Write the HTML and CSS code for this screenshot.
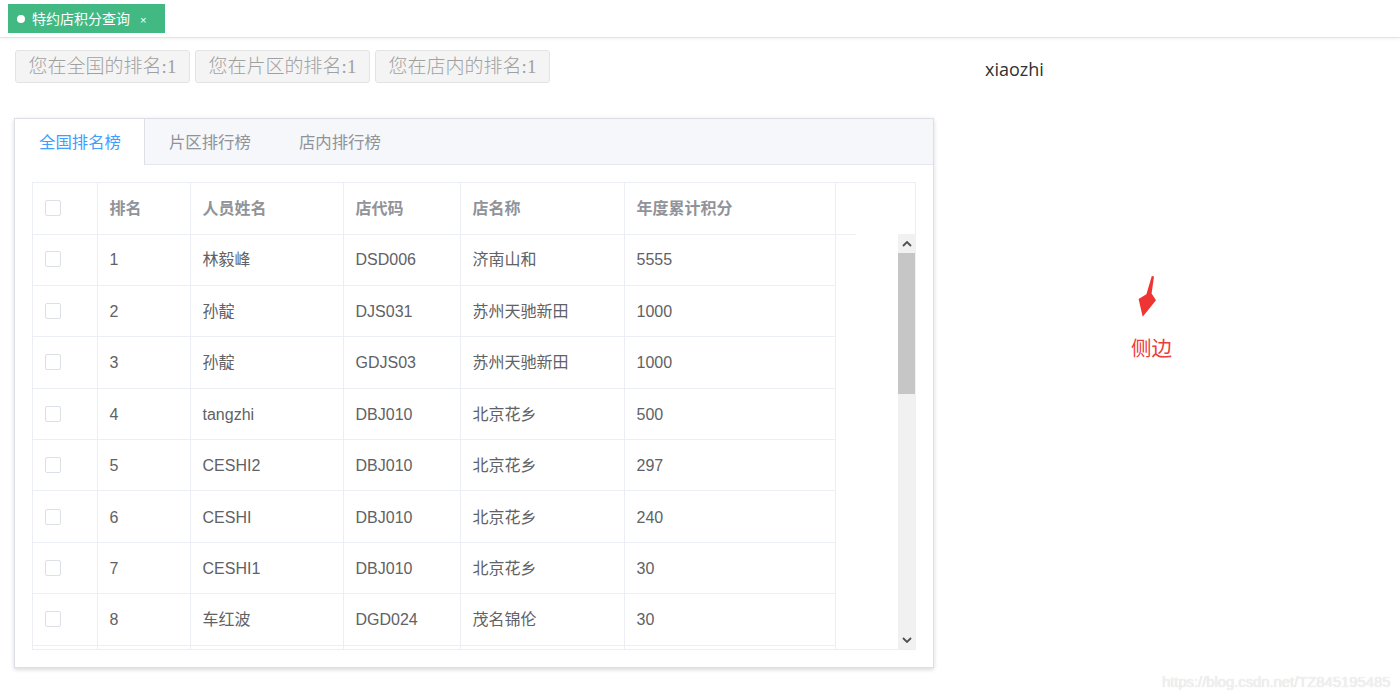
FILE: index.html
```html
<!DOCTYPE html>
<html lang="zh-CN">
<head>
<meta charset="utf-8">
<title>特约店积分查询</title>
<link rel="stylesheet" href="styles.css">
</head>
<body>
<div class="tagsbar">
  <div class="tag"><span class="dot"></span><span class="tag-text">特约店积分查询</span><span class="tag-close">×</span></div>
</div>
<div class="page">
  <div class="main">
    <div class="rank-buttons">
      <button class="rank-btn">您在全国的排名:1</button>
      <button class="rank-btn">您在片区的排名:1</button>
      <button class="rank-btn">您在店内的排名:1</button>
    </div>
    <div class="card">
      <div class="tabs">
        <div class="tab active">全国排名榜</div>
        <div class="tab">片区排行榜</div>
        <div class="tab">店内排行榜</div>
        <div class="tabs-fill"></div>
      </div>
      <div class="card-body">
        <div class="table-wrap">
          <div class="thead-row">
            <table class="grid">
              <colgroup><col class="c1"><col class="c2"><col class="c3"><col class="c4"><col class="c5"><col class="c6"><col class="c7"></colgroup>
              <tr class="head">
                <th><span class="cb"></span></th><th>排名</th><th>人员姓名</th><th>店代码</th><th>店名称</th><th>年度累计积分</th><th class="gutter"></th>
              </tr>
            </table>
            <div class="head-fill"></div>
          </div>
          <div class="tbody-row">
            <div class="body-clip">
              <table class="grid">
                <colgroup><col class="c1"><col class="c2"><col class="c3"><col class="c4"><col class="c5"><col class="c6"></colgroup>
                <tr><td><span class="cb"></span></td><td>1</td><td>林毅峰</td><td>DSD006</td><td>济南山和</td><td>5555</td></tr>
                <tr><td><span class="cb"></span></td><td>2</td><td>孙靛</td><td>DJS031</td><td>苏州天驰新田</td><td>1000</td></tr>
                <tr><td><span class="cb"></span></td><td>3</td><td>孙靛</td><td>GDJS03</td><td>苏州天驰新田</td><td>1000</td></tr>
                <tr><td><span class="cb"></span></td><td>4</td><td>tangzhi</td><td>DBJ010</td><td>北京花乡</td><td>500</td></tr>
                <tr><td><span class="cb"></span></td><td>5</td><td>CESHI2</td><td>DBJ010</td><td>北京花乡</td><td>297</td></tr>
                <tr><td><span class="cb"></span></td><td>6</td><td>CESHI</td><td>DBJ010</td><td>北京花乡</td><td>240</td></tr>
                <tr><td><span class="cb"></span></td><td>7</td><td>CESHI1</td><td>DBJ010</td><td>北京花乡</td><td>30</td></tr>
                <tr><td><span class="cb"></span></td><td>8</td><td>车红波</td><td>DGD024</td><td>茂名锦伦</td><td>30</td></tr>
                <tr class="partial"><td></td><td></td><td></td><td></td><td></td><td></td></tr>
              </table>
            </div>
            <div class="scrollbar">
              <div class="sb-btn"><svg width="10" height="6" viewBox="0 0 10 6"><path d="M1 5 L5 1 L9 5" fill="none" stroke="#505050" stroke-width="1.8"/></svg></div>
              <div class="sb-thumb"></div>
              <div class="sb-track"></div>
              <div class="sb-btn"><svg width="10" height="6" viewBox="0 0 10 6"><path d="M1 1 L5 5 L9 1" fill="none" stroke="#505050" stroke-width="1.8"/></svg></div>
            </div>
          </div>
        </div>
      </div>
    </div>
  </div>
  <div class="side">
    <div class="user">xiaozhi</div>
    <svg class="arrow" width="24" height="44" viewBox="0 0 24 44"><path d="M15.8 1 L18 1.4 L15.6 18.4 L20 25.2 L6.7 41.8 L2.6 24 L10.4 19.2 Z" fill="#ef3434"/></svg>
    <div class="side-label">侧边</div>
  </div>
</div>
<div class="watermark">https://blog.csdn.net/TZ845195485</div>
</body>
</html>
```
FILE: styles.css
```css
* { box-sizing: border-box; }
html, body { margin: 0; padding: 0; background: #fff; }
body {
  width: 1400px;
  height: 700px;
  overflow: hidden;
  position: relative;
  font-family: "Liberation Sans", "Noto Sans CJK SC", sans-serif;
  color: #606266;
}
.tagsbar {
  height: 38px;
  padding: 4px 8px 0;
  border-bottom: 1px solid #e4e4e4;
  box-shadow: 0 1px 3px rgba(0,0,0,0.06);
}
.tag {
  display: flex;
  align-items: center;
  width: 157px;
  height: 29px;
  background: #42b983;
  color: #fff;
  font-size: 14px;
  padding-left: 9px;
}
.dot { width: 8px; height: 8px; border-radius: 50%; background: #fff; margin-right: 7px; }
.tag-text { line-height: 1; }
.tag-close { font-size: 11px; margin-left: 10px; margin-top: 2px; }

.page { display: flex; }
.main { width: 958px; padding: 12px 0 0 14px; }
.rank-buttons { display: flex; gap: 5px; padding-left: 1px; }
.rank-btn {
  height: 33px;
  width: 175px;
  padding: 0;
  background: #f4f4f4;
  border: 1px solid #e3e3e3;
  border-radius: 3px;
  color: #a0a0a0;
  font-family: "Liberation Serif", "Noto Sans CJK SC", serif;
  font-size: 19px;
  font-weight: 300;
  line-height: 31px;
  text-align: center;
}
.card {
  margin-top: 35px;
  width: 920px;
  height: 550px;
  border: 1px solid #dcdfe6;
  box-shadow: 0 2px 4px rgba(0,0,0,0.12), 0 0 6px rgba(0,0,0,0.04);
  background: #fff;
}
.tabs { display: flex; height: 46px; background: #f5f7fa; border-bottom: 1px solid #e4e7ed; }
.tab {
  padding: 0 24px;
  font-size: 16.4px;
  line-height: 46px;
  color: #909399;
  height: 46px;
}
.tab.active { background: #fff; color: #409eff; border-right: 1px solid #dcdfe6; height: 46px; margin-bottom: -1px; padding-right: 23px; }
.tabs-fill { flex: 1; }
.card-body { padding: 17px 18px 0 17px; }
.table-wrap { width: 884px; height: 468px; border-left: 1px solid #ebeef5; border-bottom: 1px solid #ebeef5; }
.thead-row { display: flex; border-top: 1px solid #ebeef5; height: 52px; }
.head-fill { flex: 1; border-right: 1px solid #ebeef5; }
.grid { border-collapse: collapse; table-layout: fixed; font-size: 16px; }
.thead-row .grid { width: 823px; }
.body-clip .grid { width: 802px; }
col.c1 { width: 64px; }
col.c2 { width: 93px; }
col.c3 { width: 153px; }
col.c4 { width: 117px; }
col.c5 { width: 164px; }
col.c6 { width: 211px; }
col.c7 { width: 21px; }
th, td {
  height: 51.4px;
  padding: 2px 0 0 12px;
  text-align: left;
  vertical-align: middle;
  line-height: 20px;
  border-right: 1px solid #ebeef5;
  border-bottom: 1px solid #ebeef5;
  white-space: nowrap;
  overflow: hidden;
}
th { color: #909399; font-weight: 700; height: 51px; }
th.gutter { border-right: none; }
td { color: #606266; }
.cb {
  display: block;
  width: 16px;
  height: 16px;
  margin-top: -2px;
  border: 1px solid #dcdfe6;
  border-radius: 2px;
  background: #fff;
}
.tbody-row { display: flex; height: 415px; }
.body-clip { width: 865px; height: 415px; overflow: hidden; }
.scrollbar { width: 18px; height: 415px; background: #f1f1f1; display: flex; flex-direction: column; }
.sb-btn { height: 19px; display: flex; align-items: center; justify-content: center; }
.sb-thumb { height: 141px; background: #c6c6c6; margin: 0 1px 0 0; }
.sb-track { flex: 1; }

.side { flex: 1; padding: 19px 0 0 27px; }
.user { font-size: 18px; color: #303133; line-height: 24px; font-family: "Open Sans", "Liberation Sans", sans-serif; }
.arrow { display: block; margin: 194px 0 0 151px; }
.side-label { margin: 16px 0 0 146px; font-size: 20.5px; color: #ef3a3a; line-height: 28px; }
.watermark {
  position: absolute;
  left: 1162px;
  top: 673px;
  font-size: 15px;
  color: #f0f0f0;
  text-shadow: 0 0 1px #d8d8d8;
  letter-spacing: -0.1px;
}
```
